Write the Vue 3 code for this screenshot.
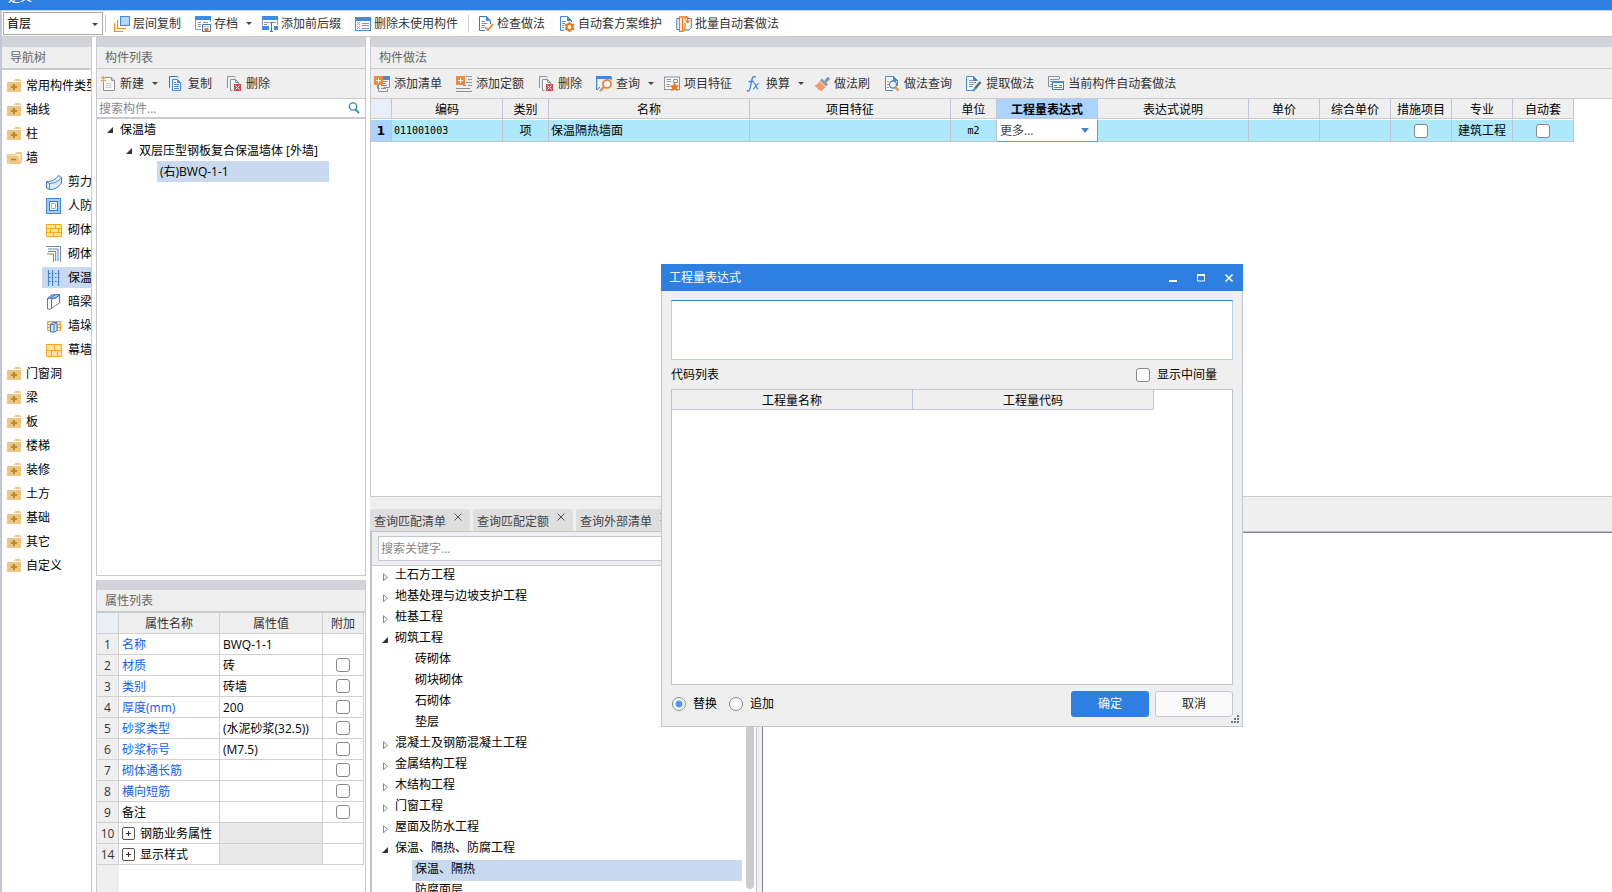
<script setup>
import { ref } from 'vue'

const icons = {
  layers: '<rect x="6.5" y=".5" width="9" height="9" fill="#b3d7ff" stroke="#3f8be0"/><path d="M3.5 4v8.500H12M.5 7v8.500H9" fill="none" stroke="#f08a3c" stroke-width="1.200"/>',
  save: '<path d="M.5 1v12.500H6M15.500 1v5" fill="none" stroke="#8a939c"/><rect width="16" height="4" fill="#3f8be0"/><path d="M3 6.500h3M8 6.500h5M3 8.500h3M3 10.500h3" stroke="#8a939c"/><path d="M7.500 8.500h8v7h-8z" fill="#fff" stroke="#3f76b8"/><path d="M9.500 12h4v3.500h-4z" fill="#f07820"/><path d="M9 10.500h5" stroke="#9dc3ee"/>',
  affix: '<path d="M.5 1v8M15.500 1v8" stroke="#8a939c"/><rect width="16" height="4" fill="#3f8be0"/><path d="M2 6.500h5M2 8.500h3M11 6.500h3" stroke="#8a939c"/><path d="M0 10h7v4H0zM12 10h4v4h-4z" fill="#3f8be0"/><path d="M8 6.500h3M9.500 6.500v9M8 15.500h3" stroke="#3f76b8"/>',
  listx: '<rect x=".5" y="1.500" width="15" height="13" fill="#fff" stroke="#3f8be0"/><rect y="1" width="16" height="4" fill="#3f8be0"/><path d="M2 6l3 3M5 6L2 9M2 10l3 3M5 10l-3 3" stroke="#f08a3c"/><path d="M7 7.500h7M7 9.500h7M7 12.500h7" stroke="#8a939c"/>',
  check: '<path d="M12.500 8V5L8.500.5h-7v14H7" fill="#fff" stroke="#3f76b8"/><path d="M8 0l5 5H8z" fill="#3f8be0"/><path d="M3.500 5.500H7M3.500 7.500h6M3.500 9.500H7M3.500 11.500H6" stroke="#8a939c"/><path d="M7 11l3 3 5-6" fill="none" stroke="#f07820" stroke-width="1.600"/>',
  gear: '<path d="M12.500 6V4.500L8.500.5h-7v14H5" fill="#fff" stroke="#3f8be0"/><path d="M8 0l5 5H8z" fill="#3f8be0"/><path d="M3 5.500h4M3 7.500h3M3 9.500h2M3 11.500h2" stroke="#8a939c"/><circle cx="10.500" cy="11" r="3" fill="#fff" stroke="#f07820" stroke-width="2.200"/><path d="M10.500 5.800v2M10.500 14.200v2M6 8.400l1.700 1M13.300 12.600l1.700 1M6 13.600l1.700-1M13.300 9.400l1.700-1" stroke="#f07820" stroke-width="2"/>',
  batch: '<path d="M4 2.500H.8v11H3M12 2.500h3.300v9L13 14H9" fill="none" stroke="#3f76b8"/><path d="M3.500.8h3v14.700h-3zM6.500.8H9v3M6.500 15.500L9 13V7" fill="none" stroke="#f07820" stroke-width="1.300"/><path d="M8.500 1h3v4" fill="none" stroke="#f07820" stroke-width="1.500"/><path d="M8.500 4.500h6l-3 3z" fill="#f07820"/>',
  create: '<path d="M5 1.500h6.500l3 3v10h-11V6" fill="#fafafa" stroke="#8a939c"/><path d="M11.500 1.500v3h3" fill="none" stroke="#8a939c"/><path d="M5.500 7.500h6M5.500 9.500h6M5.500 11.500h6" stroke="#c8cdd2"/><path d="M1 1l5 4M6 1L1 5M3.500 0v6" stroke="#ef9a3c" stroke-width="1.200"/>',
  copy: '<path d="M2 11.500H1.500v-11h8l1 1" fill="none" stroke="#3f76b8"/><path d="M4.500 3.500h5l3 3v8h-8z" fill="#fff" stroke="#3f8be0"/><path d="M9 3l4 4H9z" fill="#3f8be0"/><path d="M6 8.500h5M6 10.500h5M6 12.500h5M6 6.500h2" stroke="#3f8be0"/>',
  remove: '<path d="M2 11.500H1.500v-11h7l1 1" fill="none" stroke="#8a939c"/><path d="M6.500 14.500h-2v-11h5l3 3V8" fill="#fafafa" stroke="#8a939c"/><path d="M9.500 3.500v3h3" fill="none" stroke="#8a939c"/><rect x="8" y="8" width="7" height="7" fill="#d64550"/><path d="M9.500 9.500l4 4M13.500 9.500l-4 4" stroke="#fff"/>',
  addlist: '<path d="M9.500 1.500h6v10h-6M3.500 9v3.500h2M13.500 13v2.500h-9V9" fill="none" stroke="#8a939c"/><path d="M9 0h7v4H9z" fill="#3f8be0"/><path d="M7 5.500h6.500M7 7.500h5M7 9.500h6M7 12.500h5" stroke="#8a939c"/><rect width="9" height="9" fill="#ef8a3a"/><path d="M4.500 2v5M2 4.500h5" stroke="#fff"/>',
  addquota: '<path d="M10 .500h6M12 3.500h4M10 6.500h6M12 9.500h4M7 9.500h3M0 12.500h14M0 15.500h16" stroke="#8a939c"/><rect width="9" height="9" fill="#ef8a3a"/><path d="M4.500 2v5M2 4.500h5" stroke="#fff"/>',
  query: '<path d="M.6 14V1M15 1v3" fill="none" stroke="#3f8be0" stroke-width="1.300"/><path d="M0 0h15.500v3H0z" fill="#3f8be0"/><path d="M1 14l3-3" stroke="#3f8be0"/><circle cx="11" cy="8" r="4" fill="#fff" stroke="#ef8a3a" stroke-width="2"/><path d="M8 11l-4 4" stroke="#ef8a3a" stroke-width="2.400"/>',
  feature: '<rect x=".5" y="1" width="15" height="12.500" fill="#fafafa" stroke="#8a939c"/><path d="M2.500 3.500H7M2.500 5.500H7M2.500 8.500h3M2.500 10.500h3" stroke="#8a939c"/><path d="M9.500 3.500h4v3h-4z" fill="none" stroke="#8a939c"/><path d="M10.500 6l1.600 3.200 3.500.3-2.700 2.300.9 3.600-3.300-2-3.300 2 .9-3.600L5.400 9.500l3.500-.3z" fill="#f07820"/>',
  fx: '<path d="M9.500 1.400C8.200-.2 6.600.5 6.100 3L4 12.600C3.500 15 2.200 15.700.8 14.400M2.500 5.500H8" fill="none" stroke="#3f8be0" stroke-width="1.300"/><path d="M7.500 7.300c2.300-1 2.500 6 5 5.700M13 7.300c-1.500-.5-4.500 6-6 5.700" fill="none" stroke="#3f8be0" stroke-width="1.200"/>',
  brush: '<path d="M10.500 4.500L13.500 1h1L16 3l-4 4z" fill="#7d92a5"/><path d="M6 4.500l2-2 6 6-2 2z" fill="#8b98a4"/><path d="M5.500 5l6 6L7 15.500l-1.500-2-1 .5L3 12 .5 9.500c2-.5 3.500-2 5-4.500z" fill="#f79a70"/>',
  docfind: '<path d="M9 14.500H1.500V.5h8l4 4V10" fill="#fafafa" stroke="#3f8be0"/><path d="M9 0l5 5H9z" fill="#3f8be0"/><path d="M3 5.500h2M3 8.500h2M3 11.500h2" stroke="#8a939c"/><circle cx="9" cy="8.500" r="3.500" fill="#eaf3ff" stroke="#5f88b8" stroke-width="1.300"/><path d="M11.500 11.500l3 3" stroke="#ef9a3c" stroke-width="2.500"/>',
  extract: '<path d="M7 14.500H.5V.5h7l4 4" fill="#fafafa" stroke="#3f8be0"/><path d="M7 0l5 5H7z" fill="#3f8be0"/><path d="M3 4.500h4M3 6.500h7M3 8.500h5M3 10.500h4" stroke="#8a939c"/><path d="M14.500 6L9 12.500" stroke="#5f6a74" stroke-width="2.500"/><path d="M9.500 12l-2.500 3" stroke="#2aa5c8" stroke-width="2"/>',
  current: '<path d="M11.500 3V.5H.5v10H4M2 3.500h9" fill="none" stroke="#8a939c"/><path d="M2 5.500h2M2 8.500h2" stroke="#8a939c"/><rect x="4.500" y="5.500" width="11" height="8" fill="#fff" stroke="#3f76b8"/><path d="M4 5h12v2H4z" fill="#3f8be0"/><path d="M6 9.500h3M6 11.500h8M11 9.500h3" stroke="#3f8be0"/>',
  folder: '<path d="M1 4h14v10H1zM8 3l1.500-2H14l1 2z" fill="#efc67c"/><path d="M7 6h2v2h2v2H9v2H7v-2H5V8h2z" fill="#b98a36"/>',
  open: '<path d="M9.500 3.500h5.500v9M1.500 13.500V4.500H9l1.500-2h5v10" fill="#fff3d4" stroke="#efc67c"/><path d="M0 5.500h12L15 14H3z" fill="#efc67c"/><path d="M5 9.500h5" stroke="#a9853f" stroke-width="1.500"/>',
  shear: '<path d="M.5 7.500c6 0 9-2 12-6l3 2v5.500c-3 4-6 6.500-12 6.500l-3-1.500z" fill="#dfecfb" stroke="#3f76b8"/><path d="M3.500 9.500v6M3.500 9.500c6-.5 9-2 12-6M.5 7.500l3 2" fill="none" stroke="#3f8be0"/>',
  bunker: '<rect x=".5" y=".5" width="14" height="15" fill="#a9ccf5" stroke="#3f8be0"/><rect x="3.500" y="3.500" width="8" height="9" fill="#fff" stroke="#3f76b8"/><path d="M5.500 5.500h4v5h-4z" fill="#fff" stroke="#8ab8f0"/>',
  brick: '<path d="M.5 2.500h15v12H.5z" fill="#ffe2a0" stroke="#f5a91c"/><path d="M0 6.500h16M0 10.500h16M9.500 3v3.500M4.500 6.500v4M12.500 6.500v4M7.500 10.500v4" stroke="#f5a91c"/>',
  corner: '<path d="M0 .500h14.500V16M1 8h6.500v8" fill="none" stroke="#7c8894"/><path d="M2 3h10v12M2 5.500h7.700V15" fill="none" stroke="#3f8be0"/>',
  insul: '<path d="M2.500 0v16M6.500 0v16M12.500 0v16" stroke="#3f8be0" stroke-width="1.200"/><path d="M3 3.500h11M3 7.500h11M3 11.500h11" stroke="#3f76b8" stroke-dasharray="1.500 1.500"/>',
  hidden: '<path d="M1.500 4.500L5 1.500l8.500-1v8.500L9.500 11.500 4.500 15h-3z" fill="#fff" stroke="#6f7c8c"/><path d="M1.500 4.500l4-3.500 8-.5L10 4z" fill="#b3d7ff" stroke="#3f76b8"/><path d="M5.500 5.500V14M5.500 5.500l8-4M4 4l5-3" fill="none" stroke="#3f76b8"/>',
  pier: '<path d="M1.500 3.500h13v9h-13z" fill="#ffe2a0" stroke="#f5a91c"/><path d="M1 6.500h14M1 9.500h14" stroke="#f5a91c"/><path d="M4.500 6.500L7 4.500h4v8l-2 1.500H4.500z" fill="#cfe4fc" stroke="#3f76b8"/><path d="M4.500 6.500H8V14M8 6.500l2.500-2" fill="none" stroke="#3f8be0"/>',
  curtain: '<path d="M.5 2.500h15v12H.5z" fill="#ffe2a0" stroke="#f5a91c"/><path d="M0 8.500h16M8.500 3v5.500M5.500 8.500v6M11.500 8.500v6" stroke="#f5a91c"/>'
}

const topTools = [
  { icon: 'layers', text: '层间复制' },
  { icon: 'save', text: '存档', caret: true },
  { icon: 'affix', text: '添加前后缀' },
  { icon: 'listx', text: '删除未使用构件' },
  { sep: true },
  { icon: 'check', text: '检查做法' },
  { icon: 'gear', text: '自动套方案维护' },
  { icon: 'batch', text: '批量自动套做法' }
]
const listTools = [
  { icon: 'create', text: '新建', caret: true },
  { icon: 'copy', text: '复制' },
  { icon: 'remove', text: '删除' }
]
const methodTools = [
  { icon: 'addlist', text: '添加清单' },
  { icon: 'addquota', text: '添加定额' },
  { icon: 'remove', text: '删除' },
  { icon: 'query', text: '查询', caret: true },
  { icon: 'feature', text: '项目特征' },
  { icon: 'fx', text: '换算', caret: true },
  { icon: 'brush', text: '做法刷' },
  { icon: 'docfind', text: '做法查询' },
  { icon: 'extract', text: '提取做法' },
  { icon: 'current', text: '当前构件自动套做法' }
]
const f = (text) => ({ icon: 'folder', text })
const c = (icon, text, active) => ({ icon, text, child: true, active })
const nav = [
  f('常用构件类型'), f('轴线'), f('柱'), { icon: 'open', text: '墙' },
  c('shear', '剪力墙'), c('bunker', '人防门框墙'), c('brick', '砌体墙'), c('corner', '砌体加筋'),
  c('insul', '保温墙', true), c('hidden', '暗梁'), c('pier', '墙垛'), c('curtain', '幕墙'),
  f('门窗洞'), f('梁'), f('板'), f('楼梯'), f('装修'), f('土方'), f('基础'), f('其它'), f('自定义')
]
const props = [
  { n: 1, name: '名称', value: 'BWQ-1-1' },
  { n: 2, name: '材质', value: '砖', box: true },
  { n: 3, name: '类别', value: '砖墙', box: true },
  { n: 4, name: '厚度(mm)', value: '200', box: true },
  { n: 5, name: '砂浆类型', value: '(水泥砂浆(32.5))', box: true },
  { n: 6, name: '砂浆标号', value: '(M7.5)', box: true },
  { n: 7, name: '砌体通长筋', value: '', box: true },
  { n: 8, name: '横向短筋', value: '', box: true },
  { n: 9, name: '备注', value: '', box: true, plain: true },
  { n: 10, name: '钢筋业务属性', group: true },
  { n: 14, name: '显示样式', group: true }
]
const tabs = ['查询匹配清单', '查询匹配定额', '查询外部清单']
const outline = [
  { text: '土石方工程', state: 'closed' },
  { text: '地基处理与边坡支护工程', state: 'closed' },
  { text: '桩基工程', state: 'closed' },
  { text: '砌筑工程', state: 'opened' },
  { text: '砖砌体' }, { text: '砌块砌体' }, { text: '石砌体' }, { text: '垫层' },
  { text: '混凝土及钢筋混凝土工程', state: 'closed' },
  { text: '金属结构工程', state: 'closed' },
  { text: '木结构工程', state: 'closed' },
  { text: '门窗工程', state: 'closed' },
  { text: '屋面及防水工程', state: 'closed' },
  { text: '保温、隔热、防腐工程', state: 'opened' },
  { text: '保温、隔热', active: true },
  { text: '防腐面层' }
]
const mode = ref('replace')
</script>

<template>
  <div class="app">
    <header class="titlebar"><span>定义</span></header>
    <div class="body">
      <div class="topbar">
        <span class="floor">
          <select aria-label="楼层"><option>首层</option></select>
          <i class="caret"></i>
        </span>
        <span class="sep"></span>
        <template v-for="(t, i) in topTools" :key="i">
          <span v-if="t.sep" class="sep"></span>
          <button v-else class="top-btn">
            <svg class="ico" viewBox="0 0 16 16" v-html="icons[t.icon]"></svg>{{ t.text }}<i v-if="t.caret" class="caret"></i>
          </button>
        </template>
      </div>

      <div class="workspace">
        <nav class="nav">
          <div class="strip"></div>
          <h2 class="title thick">导航树</h2>
          <ul>
            <li v-for="n in nav" :key="n.text" :class="{ child: n.child, active: n.active }">
              <svg class="ico" viewBox="0 0 16 16" v-html="icons[n.icon]"></svg><span>{{ n.text }}</span>
            </li>
          </ul>
        </nav>

        <div class="side">
          <section class="panel list-panel">
            <div class="strip"></div>
            <h2 class="title">构件列表</h2>
            <div class="tools">
              <button v-for="t in listTools" :key="t.text" class="tool">
                <svg class="ico" viewBox="0 0 16 16" v-html="icons[t.icon]"></svg>{{ t.text }}<i v-if="t.caret" class="caret"></i>
              </button>
            </div>
            <div class="search">
              <input type="text" placeholder="搜索构件..." aria-label="搜索构件">
              <svg viewBox="0 0 12 12"><circle cx="5" cy="4.500" r="3.700" fill="none" stroke="#2f88bd" stroke-width="1.300" /><path d="M7.500 7.500L11 11" stroke="#2f88bd" stroke-width="1.800" /></svg>
            </div>
            <ul class="tree parts">
              <li class="l0"><svg class="tri" viewBox="0 0 8 8"><path d="M7 1v6H1z" fill="#333" /></svg>保温墙</li>
              <li class="l1"><svg class="tri" viewBox="0 0 8 8"><path d="M7 1v6H1z" fill="#333" /></svg>双层压型钢板复合保温墙体 [外墙]</li>
              <li class="l2"><span class="hit">(右)BWQ-1-1</span></li>
            </ul>
          </section>

          <section class="panel prop-panel">
            <div class="strip"></div>
            <h2 class="title thick">属性列表</h2>
            <table class="props">
              <colgroup><col class="w-no"><col class="w-name"><col class="w-val"><col class="w-add"></colgroup>
              <thead><tr><th class="corner"></th><th>属性名称</th><th>属性值</th><th>附加</th></tr></thead>
              <tbody>
                <tr v-for="p in props" :key="p.n">
                  <th scope="row">{{ p.n }}</th>
                  <td :class="{ link: !p.plain && !p.group }">
                    <button v-if="p.group" class="expand" :aria-label="'展开' + p.name"></button>{{ p.name }}
                  </td>
                  <td :class="{ off: p.group }">{{ p.value }}</td>
                  <td class="mid box"><input v-if="p.box" type="checkbox" :aria-label="p.name + '附加'"></td>
                </tr>
              </tbody>
            </table>
            <div class="gutter"></div>
          </section>
        </div>

        <div class="main">
          <section class="method">
            <div class="strip"></div>
            <h2 class="title">构件做法</h2>
            <div class="tools">
              <button v-for="t in methodTools" :key="t.text" class="tool">
                <svg class="ico" viewBox="0 0 16 16" v-html="icons[t.icon]"></svg>{{ t.text }}<i v-if="t.caret" class="caret"></i>
              </button>
            </div>
            <table class="grid">
              <colgroup>
                <col class="g21"><col class="g111"><col class="g46"><col class="g201"><col class="g201"><col class="g46"><col class="g101"><col class="g151"><col class="g71"><col class="g71"><col class="g61"><col class="g61"><col class="g61">
              </colgroup>
              <thead>
                <tr>
                  <th class="corner"></th><th>编码</th><th>类别</th><th>名称</th><th>项目特征</th><th>单位</th>
                  <th class="current">工程量表达式</th><th>表达式说明</th><th>单价</th><th>综合单价</th><th>措施项目</th><th>专业</th><th>自动套</th>
                </tr>
              </thead>
              <tbody>
                <tr>
                  <th scope="row">1</th><td class="mono">011001003</td><td class="mid">项</td><td>保温隔热墙面</td><td></td><td class="mono mid">m2</td>
                  <td class="edit"><span class="combo"><select aria-label="工程量表达式"><option>更多...</option></select><i></i></span></td>
                  <td></td><td></td><td></td>
                  <td class="mid"><input type="checkbox" aria-label="措施项目"></td><td class="mid">建筑工程</td>
                  <td class="mid"><input type="checkbox" aria-label="自动套"></td>
                </tr>
              </tbody>
            </table>
          </section>

          <section class="lower">
            <div class="tabs">
              <div v-for="t in tabs" :key="t" class="tab">
                <button class="tab-name">{{ t }}</button>
                <button class="close" :aria-label="'关闭' + t"><svg viewBox="0 0 8 8"><path d="M.5.5l7 7M7.500.5l-7 7" stroke="#555" /></svg></button>
              </div>
            </div>
            <div class="split">
              <div class="finder">
                <div class="keyword"><input type="text" placeholder="搜索关键字..." aria-label="搜索关键字"></div>
                <div class="scroller">
                  <ul class="tree outline">
                    <li v-for="o in outline" :key="o.text" :class="{ leaf: !o.state, active: o.active }">
                      <svg v-if="o.state === 'closed'" class="tri" viewBox="0 0 8 8"><path d="M2.500.8v6.900L6.500 4.200z" fill="#fff" stroke="#888" /></svg>
                      <svg v-else-if="o.state" class="tri" viewBox="0 0 8 8"><path d="M7 1v6H1z" fill="#333" /></svg>
                      <span>{{ o.text }}</span>
                    </li>
                  </ul>
                  <div class="thumb"></div>
                </div>
              </div>
              <div class="divider"></div>
              <div class="blank"></div>
            </div>
          </section>
        </div>
      </div>
    </div>

    <div class="dialog" role="dialog" aria-label="工程量表达式">
      <div class="dlg-title">
        <span>工程量表达式</span>
        <button aria-label="最小化"><svg viewBox="0 0 10 10"><path d="M1 8h8" stroke="#fff" stroke-width="2" /></svg></button>
        <button aria-label="最大化"><svg viewBox="0 0 10 10"><path d="M1.500 2v6h7V2z" fill="none" stroke="#fff" /><path d="M1 2h8" stroke="#fff" stroke-width="2" /></svg></button>
        <button aria-label="关闭"><svg viewBox="0 0 10 10"><path d="M1.500 1.500l7 7M8.500 1.500l-7 7" stroke="#fff" stroke-width="1.600" /></svg></button>
      </div>
      <div class="dlg-body">
        <textarea aria-label="表达式"></textarea>
        <div class="dlg-row">
          <span>代码列表</span>
          <label><input type="checkbox">显示中间量</label>
        </div>
        <div class="codes">
          <table><thead><tr><th>工程量名称</th><th>工程量代码</th></tr></thead></table>
        </div>
        <div class="dlg-foot">
          <label><input v-model="mode" type="radio" name="mode" value="replace">替换</label>
          <label><input v-model="mode" type="radio" name="mode" value="append">追加</label>
          <span class="space"></span>
          <button class="ok">确定</button>
          <button class="cancel">取消</button>
        </div>
      </div>
      <svg class="grip" viewBox="0 0 8 8"><path d="M6 0h2v2H6zM3 3h2v2H3zM6 3h2v2H6zM0 6h2v2H0zM3 6h2v2H3zM6 6h2v2H6z" fill="#777" /></svg>
    </div>
  </div>
</template>

<style>
body { margin: 0; overflow: hidden; }
</style>

<style scoped>
* { box-sizing: border-box; }
.app { position: relative; height: 100vh; display: flex; flex-direction: column; background: #fff; color: #000; font: 12px/20px "Open Sans", "Noto Sans CJK SC", sans-serif; white-space: nowrap; overflow: hidden; }
button, input, select, textarea { font: inherit; color: inherit; margin: 0; padding: 0; border: 0; background: none; border-radius: 0; outline: 0; }
ul { list-style: none; margin: 0; padding: 0; }
table { border-collapse: separate; border-spacing: 0; table-layout: fixed; }
th, td { padding: 0; font-weight: 400; overflow: hidden; }
.ico { width: 16px; height: 16px; flex: none; }
.caret { width: 0; height: 0; margin-left: 8px; border: 3px solid transparent; border-top: 3px solid #444; border-bottom: 0; }
input[type="checkbox"] { appearance: none; width: 14px; height: 14px; border: 1px solid #888; border-radius: 3px; background: #fff; flex: none; }
td input[type="checkbox"] { display: block; margin: 0 auto; }

.titlebar { height: 10px; flex: none; background: #2d7fe2; color: #fff; overflow: hidden; display: flex; align-items: flex-end; padding: 0 8px 4px; }
.titlebar span { line-height: 16px; }
.body { flex: 1; min-height: 0; display: flex; flex-direction: column; border-left: 2px solid #c0c8d8; }
.topbar { height: 27px; flex: none; display: flex; align-items: center; gap: 3px; padding-left: 1px; border-top: 1px solid #c4d2e6; border-bottom: 1px solid #c8cad0; }
.floor { position: relative; width: 100px; height: 23px; border: 1px solid #aaa; display: flex; align-items: center; }
.floor select { appearance: none; width: 100%; height: 100%; padding-left: 3px; }
.floor .caret { position: absolute; right: 4px; top: 10px; }
.sep { width: 1px; height: 17px; background: #ccc; margin-right: 2px; }
.floor + .sep { margin-left: -1px; margin-right: 1px; }
.top-btn { height: 21px; display: flex; align-items: center; gap: 3px; padding: 0 7px 0 4px; border-radius: 3px; color: #333; box-shadow: 0 0 2px #eee; }
.top-btn .caret { margin-left: 5px; margin-right: -4px; }

.workspace { flex: 1; min-height: 0; display: flex; gap: 4px; }
.strip { height: 10px; flex: none; background: #d3d4da; }
.title { margin: 0; height: 22px; flex: none; padding-left: 8px; background: #efefef; border-bottom: 1px solid #c8cad0; color: #666; font: inherit; line-height: 22px; }
.title.thick { height: 23px; border-bottom-width: 2px; }
.nav { width: 90px; flex: none; border-right: 1px solid #c8cad0; overflow: hidden; }
.nav ul { padding-top: 5px; }
.nav li { height: 21px; margin-bottom: 3px; padding-left: 4px; display: flex; align-items: center; gap: 4px; }
.nav li.child { margin-left: 40px; gap: 6px; }
.nav li.active { background: #c9d9f0; }

.side { width: 270px; flex: none; display: flex; flex-direction: column; gap: 4px; }
.panel { border: 1px solid #c8cad0; border-top: 0; display: flex; flex-direction: column; min-height: 0; overflow: hidden; }
.list-panel { flex: 539 1 0; }
.prop-panel { flex: 312 1 0; border-bottom: 0; }
.tools { height: 30px; flex: none; display: flex; align-items: center; gap: 14px; padding: 0 3px; background: #efefef; border-bottom: 1px solid #c8cad0; overflow: hidden; }
.tool { display: flex; align-items: center; gap: 4px; color: #333; flex: none; }
.tool .caret { margin-left: 4px; margin-right: -4px; }
.search { height: 20px; flex: none; display: flex; align-items: center; padding: 0 5px 0 2px; border-bottom: 2px solid #c8cad0; }
.search input { flex: 1; height: 100%; }
.search svg { width: 12px; height: 12px; }
::placeholder { color: #888; opacity: 1; }
.tree li { height: 21px; display: flex; align-items: center; line-height: 21px; }
.tri { width: 8px; height: 8px; flex: none; }
.parts .l0 { padding-left: 9px; gap: 6px; }
.parts .l1 { padding-left: 28px; gap: 6px; }
.parts .l2 { padding-left: 60px; }
.hit { width: 172px; padding-left: 3px; background: #c9d9f0; }

.props { width: 267px; flex: none; }
.w-no { width: 22px; } .w-name { width: 101px; } .w-val { width: 103px; } .w-add { width: 41px; }
.props th, .props td { height: 21px; padding-top: 2px; line-height: 18px; border-right: 1px solid #d0d0d0; border-bottom: 1px solid #d0d0d0; }
.props th { background: #efefef; color: #333; }
.props .corner, .grid .corner { background: #e9eff8; }
.props td { padding-left: 3px; text-align: left; }
.props td.mid { padding-left: 0; }
.props td.box { padding-top: 0; }
.props .link { color: #1060f5; }
.props .off { background: #e9e9e9; }
.expand { width: 13px; height: 13px; margin-right: 5px; border: 1px solid #555; border-radius: 2px; vertical-align: -1px; background: linear-gradient(#333, #333) center / 5px 1px no-repeat, linear-gradient(#333, #333) center / 1px 5px no-repeat; }
.gutter { flex: 1; width: 22px; background: #efefef; }

.main { flex: 1; min-width: 0; display: flex; flex-direction: column; }
.method { flex: 460 1 0; min-height: 0; border-left: 1px solid #c8cad0; border-bottom: 1px solid #c8cad0; overflow: hidden; }
.grid { width: 1203px; }
.g21 { width: 21px; } .g111 { width: 111px; } .g46 { width: 46px; } .g201 { width: 201px; } .g101 { width: 101px; } .g151 { width: 151px; } .g71 { width: 71px; } .g61 { width: 61px; }
.grid th { height: 20px; padding-top: 2px; line-height: 17px; background: #efefef; border-right: 1px solid #c0c8d8; border-bottom: 1px solid #c8cad0; }
.grid th.current { background: #aad3ff; font-weight: 700; }
.grid tbody th, .grid td { height: 23px; line-height: 20px; border-top: 1px solid #fff; border-right: 1px solid #c0c4cc; border-bottom: 1px solid #c0c4cc; background: #ade8fb; background-clip: padding-box; }
.grid tbody th { padding-top: 0; background: #aad3ff; background-clip: padding-box; font: bold 12px/20px "DejaVu Sans", sans-serif; }
.grid td { padding-left: 2px; }
.grid td.mid, .mid { padding-left: 0; text-align: center; }
.grid .mono { font-family: "DejaVu Sans Mono", monospace; font-size: 10px; }
.grid td.edit { padding: 0; background: #fff; border-right-color: #4aa8cc; border-bottom-color: #4aa8cc; }
.combo { position: relative; display: flex; height: 21px; }
.combo select { appearance: none; width: 100%; padding-left: 3px; color: #444; }
.combo i { position: absolute; right: 8px; top: 8px; border: 4px solid transparent; border-top: 5px solid #3f88bd; border-bottom: 0; }

.lower { flex: 395 1 0; min-height: 0; display: flex; flex-direction: column; background: #efefef; }
.tabs { height: 35px; flex: none; display: flex; align-items: flex-end; gap: 3px; border-bottom: 1px solid #c0c4cc; }
.tab { width: 100px; height: 22px; display: flex; align-items: center; padding-left: 4px; gap: 8px; background: #dedede; border-radius: 3px 3px 0 0; color: #444; }
.tab-name { padding-top: 3px; line-height: 19px; }
.close { width: 8px; height: 14px; display: flex; align-items: flex-start; }
.close svg { width: 8px; height: 8px; }
.split { flex: 1; min-height: 0; display: flex; }
.finder { width: 387px; flex: none; display: flex; flex-direction: column; border-left: 2px solid #c0c4cc; border-right: 1px solid #c0c4cc; }
.keyword { height: 34px; flex: none; padding: 4px 6px; border-bottom: 1px solid #c8cad0; }
.keyword input { width: 100%; height: 25px; padding-left: 2px; border: 1px solid #c0c8d8; background: #fff; }
.scroller { flex: 1; min-height: 0; display: flex; gap: 4px; background: #fff; padding-right: 2px; overflow: hidden; }
.outline { flex: 1; overflow: hidden; }
.outline li { padding-left: 9px; gap: 6px; }
.outline li span { align-self: flex-start; line-height: 18px; }
.outline li.leaf { margin-left: 40px; padding-left: 3px; }
.outline .active { background: #c9d9f0; }
.thumb { width: 8px; margin-bottom: 3px; border-radius: 4px; background: #ccc; }
.divider { width: 5px; }
.blank { flex: 1; background: #fff; border-left: 1px solid #80838f; border-top: 1px solid #80838f; }

.dialog { position: absolute; left: 661px; top: 264px; width: 582px; height: 463px; display: flex; flex-direction: column; background: #efefef; border: 1px solid #c0c8d8; border-top: 0; }
.dlg-title { height: 27px; flex: none; margin: 0 -1px; padding: 0 9px 0 8px; display: flex; align-items: center; gap: 18px; background: #2d7fe2; color: #fff; }
.dlg-title span { flex: 1; }
.dlg-title button { width: 10px; height: 10px; display: flex; }
.dlg-title svg { width: 10px; height: 10px; }
.dlg-body { flex: 1; min-height: 0; display: flex; flex-direction: column; padding: 9px; }
textarea { display: block; height: 60px; width: 100%; resize: none; border: 1px solid #add5e8; border-top-color: #3a7db5; background: #fff; }
.dlg-row { height: 29px; flex: none; display: flex; align-items: center; justify-content: space-between; padding-right: 16px; }
label { display: flex; align-items: center; gap: 7px; }
.codes { flex: 1; min-height: 0; background: #fff; border: 1px solid #c0c4cc; }
.codes table { width: 482px; }
.codes th { height: 20px; padding-top: 2px; line-height: 17px; background: #efefef; border-right: 1px solid #c0c8d8; border-bottom: 1px solid #c0c8d8; }
.dlg-foot { flex: none; height: 32px; padding-top: 6px; display: flex; align-items: center; gap: 12px; }
.dlg-foot label:first-child { margin-left: 1px; }
input[type="radio"] { appearance: none; width: 14px; height: 14px; border: 1px solid #888; border-radius: 50%; background: #fff; }
input[type="radio"]:checked { background: radial-gradient(circle, #4a9bf8 3px, #fff 4px); }
.space { flex: 1; }
.dlg-foot button { width: 78px; height: 26px; border-radius: 3px; }
.ok { background: #2d7fe2; color: #fff; margin-right: -6px; }
.cancel { background: #fafafa; border: 1px solid #c0c8d8; color: #222; }
.grip { position: absolute; right: 3px; bottom: 3px; width: 8px; height: 8px; }
</style>
